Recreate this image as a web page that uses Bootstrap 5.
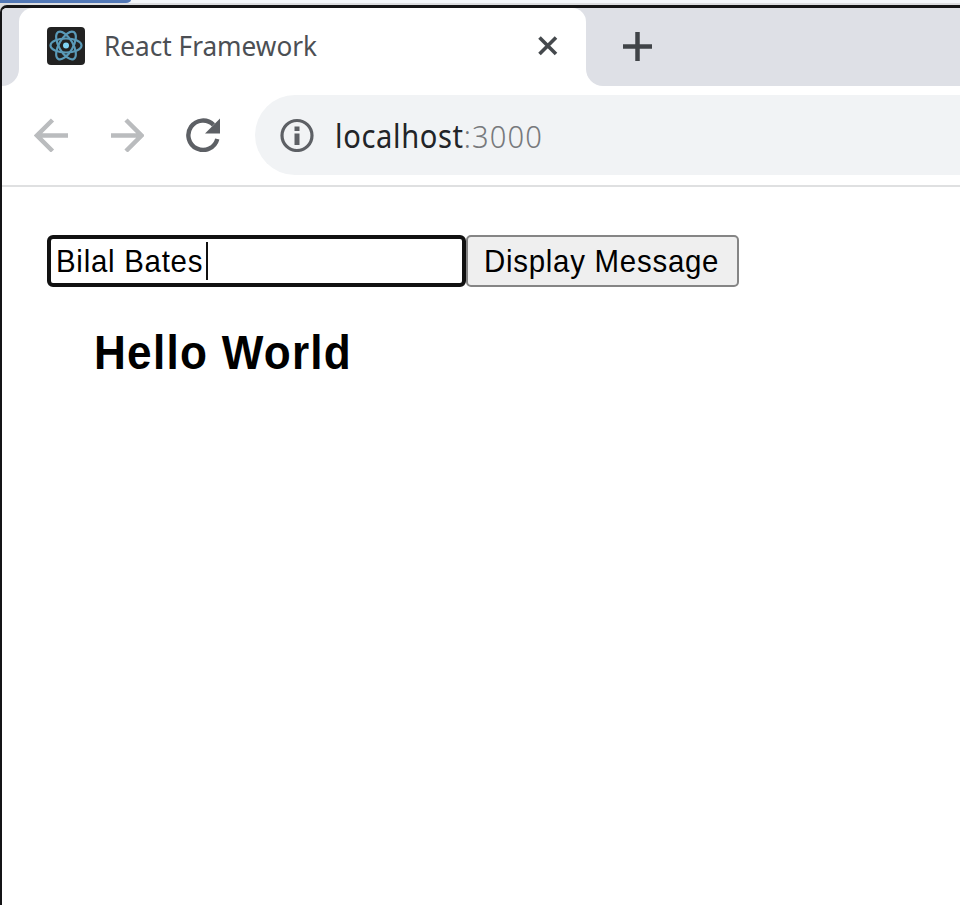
<!DOCTYPE html>
<html lang="en">
<head>
<meta charset="utf-8">
<title>React Framework</title>
<link href="https://cdn.jsdelivr.net/npm/bootstrap@5.3.0/dist/css/bootstrap.min.css" rel="stylesheet">
<style>
  html, body { height: 100%; }
  body { background: #fff; font-family: "Liberation Sans", Arial, sans-serif; color: #000; }
  .backdrop { height: 905px; background: linear-gradient(#f3f6fa 3px, #dcdde0 3px, #dcdde0 100%); }
  .behind { height: 5px; }
  .behind-bar { width: 131px; height: 3px; background: #5278b6; border-bottom-right-radius: 5px 3px; }
  .browser { height: 900px; border: solid #141416; border-width: 3px 0 0 2px; border-top-left-radius: 7px; background: #fff; }
  .tab-strip { height: 78px; }
  .strip-left { width: 17px; background: #dee0e6; border-bottom-right-radius: 17px; }
  .strip-right { background: #dee0e6; border-bottom-left-radius: 17px; padding-left: 37px; padding-bottom: 2px; }
  .strip-mid { background: linear-gradient(#dee0e6 50%, #fff 50%); }
  .page-tab { width: 567px; height: 78px; background: #fff; border-radius: 14px 14px 0 0; padding: 0 28px 3px; }
  .tab-title, .address { font-family: "Noto Sans", "Open Sans", sans-serif; white-space: nowrap; line-height: 1; transform-origin: 0 50%; }
  .tab-title { font-size: 28px; color: #4c4f54; margin: -2px 0 0 19px; transform: scaleX(.935); }
  .tool-bar { height: 101px; border-bottom: 2px solid #dfe0e1; padding: 9px 0 10px 32px; }
  .nav-icon { margin-right: 42px; }
  .omnibox { background: #f1f3f5; height: 80px; border-radius: 40px 0 0 40px; padding-left: 25px; margin-left: -7px; }
  .address { font-size: 32px; color: #222428; margin: 1px 0 0 21px; transform: scaleX(.91); letter-spacing: .7px; }
  .address span { color: #77797c; font-weight: 300; letter-spacing: 1.200px; }
  .page-body { padding: 48px 0 0 45px; }
  .name-box { width: 419px; height: 52px; border: 4px solid #111; border-radius: 6px; padding-left: 5px; }
  .plain-text { font-size: 32px; line-height: 47px; white-space: nowrap; }
  .name-text, .show-text { display: block; transform: scaleX(.92); transform-origin: 0 50%; letter-spacing: .8px; }
  .name-text { width: 150px; }
  .caret { width: 2px; height: 38px; background: #111; }
  .show-btn { width: 273px; height: 52px; border: 2px solid #858585; border-radius: 5px; background: #efefef; padding: 0 0 0 16px; text-align: left; color: #000; }
  .greeting { font-size: 49px; font-weight: 700; line-height: 56px; margin: 37px 0 0 47px; letter-spacing: 1.400px; transform: scaleX(.9); transform-origin: 0 50%; }
</style>
<script src="https://cdn.jsdelivr.net/npm/bootstrap@5.3.0/dist/js/bootstrap.bundle.min.js"></script>
</head>
<body class="overflow-hidden">
<div class="backdrop">
  <div class="behind"><div class="behind-bar"></div></div>
  <div class="browser overflow-hidden">
    <header>
      <div class="tab-strip d-flex">
        <div class="strip-left flex-shrink-0"></div>
        <div class="strip-mid flex-shrink-0">
          <div class="page-tab d-flex align-items-center">
            <svg class="flex-shrink-0" width="38" height="38" viewBox="0 0 38 38" fill="none">
              <rect width="38" height="38" rx="4" fill="#222"/>
              <g stroke="#5a9ab8" stroke-width="2.200">
                <ellipse cx="19" cy="18.500" rx="15.500" ry="7"/>
                <ellipse cx="19" cy="18.500" rx="15.500" ry="7" transform="rotate(60 19 18.500)"/>
                <ellipse cx="19" cy="18.500" rx="15.500" ry="7" transform="rotate(120 19 18.500)"/>
              </g>
              <circle cx="19" cy="18.500" r="3" fill="#7fd3f5"/>
            </svg>
            <span class="tab-title">React Framework</span>
            <svg class="ms-auto" width="20" height="20" viewBox="0 0 20 20" stroke="#45494d" stroke-width="3.600"><path d="M1.500 1.500 18 18M18 1.500 1.500 18"/></svg>
          </div>
        </div>
        <div class="strip-mid flex-grow-1 d-flex">
          <div class="strip-right flex-grow-1 d-flex align-items-center">
            <svg width="29" height="29" viewBox="0 0 29 29" stroke="#404448" stroke-width="4.500"><path d="M0 14.500H29M14.500 0V29"/></svg>
          </div>
        </div>
      </div>
      <nav class="tool-bar d-flex align-items-center">
        <svg class="nav-icon flex-shrink-0" width="34" height="34" viewBox="0 0 34 34" fill="none" stroke="#babcbe" stroke-width="4.500"><path d="M34 17.500H4M18.500 2 3 17.500 18.500 33"/></svg>
        <svg class="nav-icon flex-shrink-0" width="34" height="34" viewBox="0 0 34 34" fill="none" stroke="#babcbe" stroke-width="4.500"><path d="M1 17.500H31M16 2 31.500 17.500 16 33"/></svg>
        <svg class="nav-icon flex-shrink-0" width="34" height="34" viewBox="0 0 34 34"><path d="M31.300 21A14.700 14.700 0 1 1 27.500 6.900" fill="none" stroke="#5d6065" stroke-width="4.400"/><path d="M34 .5V15.500H19Z" fill="#5d6065"/></svg>
        <div class="omnibox flex-grow-1 d-flex align-items-center">
          <svg class="flex-shrink-0" width="34" height="34" viewBox="0 0 34 34"><circle cx="17" cy="17.500" r="15" fill="none" stroke="#5d6065" stroke-width="3.200"/><path d="M14.500 8.500h5v4.500h-5zM14.500 15.500h5v11.500h-5z" fill="#5d6065"/></svg>
          <div class="address">localhost<span>:3000</span></div>
        </div>
      </nav>
    </header>
    <main class="page-body">
      <div class="d-flex">
        <div class="name-box d-flex align-items-center plain-text"><span class="name-text">Bilal Bates</span><i class="caret"></i></div>
        <button type="button" class="show-btn plain-text"><span class="show-text">Display Message</span></button>
      </div>
      <h1 class="greeting">Hello World</h1>
    </main>
  </div>
</div>
</body>
</html>
